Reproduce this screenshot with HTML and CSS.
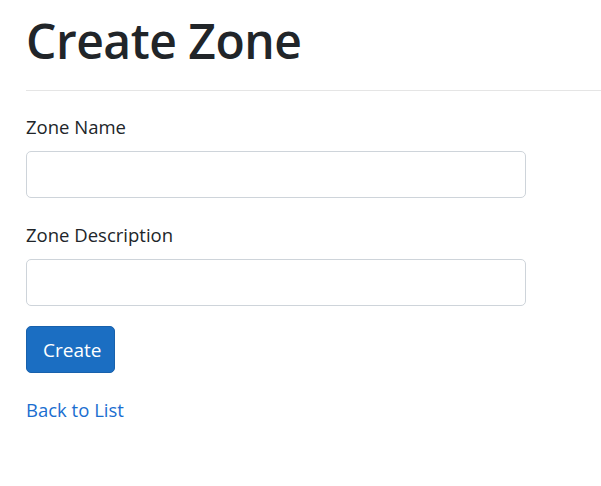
FILE: index.html
```html
<!DOCTYPE html>
<html lang="en">
<head>
<meta charset="utf-8">
<title>Create Zone</title>
<link rel="stylesheet" href="styles.css">
</head>
<body>
<main class="page">
  <h1 class="title">Create Zone</h1>
  <hr class="rule">
  <form class="form">
    <div class="group">
      <label class="label" for="name">Zone Name</label>
      <input class="control" id="name" type="text">
    </div>
    <div class="group">
      <label class="label" for="desc">Zone Description</label>
      <input class="control" id="desc" type="text">
    </div>
    <div class="actions">
      <button class="btn" type="submit">Create</button>
    </div>
  </form>
  <div class="back"><a class="link" href="#">Back to List</a></div>
</main>
</body>
</html>
```
FILE: styles.css
```css
html, body {
  margin: 0;
  padding: 0;
  background: #fff;
}
body {
  font-family: "Open Sans", "Noto Sans", sans-serif;
  color: #212529;
}
.page {
  padding-left: 26px;
}
.title {
  margin: 12px 0 0;
  font-size: 48px;
  line-height: 58px;
  font-weight: 600;
  letter-spacing: -0.5px;
  color: #212529;
}
.rule {
  margin: 20px 0 0;
  border: 0;
  border-top: 1px solid #e5e5e5;
  height: 0;
}
.form {
  display: flex;
  flex-direction: column;
  width: 500px;
}
.group {
  display: flex;
  flex-direction: column;
  margin-top: 22px;
}
.group + .group {
  margin-top: 23px;
}
.label {
  font-size: 18.5px;
  line-height: 27px;
  margin-bottom: 11px;
}
.control {
  box-sizing: border-box;
  width: 500px;
  height: 47px;
  border: 1px solid #ced4da;
  border-radius: 5px;
  background: #fff;
  margin: 0;
  font: inherit;
}
.actions {
  margin-top: 20px;
}
.btn {
  box-sizing: border-box;
  height: 47px;
  padding: 0 16px;
  width: 89px;
  font-family: inherit;
  font-size: 19px;
  color: #fff;
  background: #1b6ec2;
  border: 1px solid #1861ac;
  border-radius: 5px;
}
.back {
  margin-top: 23px;
  font-size: 18.5px;
  line-height: 27px;
}
.link {
  color: #1a6ed0;
  text-decoration: none;
}
```
